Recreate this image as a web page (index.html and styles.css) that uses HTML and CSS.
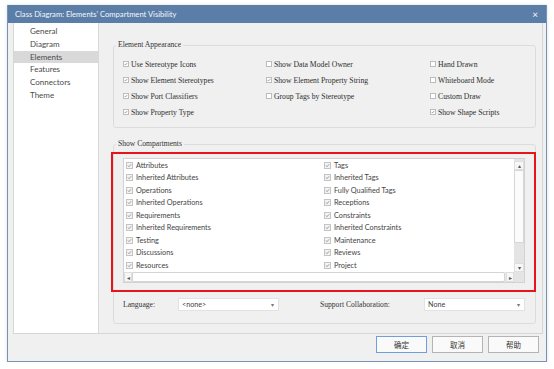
FILE: index.html
```html
<!DOCTYPE html>
<html lang="en">
<head>
    <meta charset="UTF-8">
    <title>Class Diagram: Elements' Compartment Visibility</title>
    <link rel="stylesheet" href="styles.css">
</head>
<body>
    <div class="dialog">
        <div class="titlebar">
            <span class="title">Class Diagram: Elements' Compartment Visibility</span>
            <span class="close">×</span>
        </div>

        <div class="main">
            <ul class="nav">
                <li>General</li>
                <li>Diagram</li>
                <li class="active">Elements</li>
                <li>Features</li>
                <li>Connectors</li>
                <li>Theme</li>
            </ul>

            <div class="content">
                <fieldset class="group appearance">
                    <legend>Element Appearance</legend>
                    <div class="opts">
                        <label class="opt"><span class="cb on"><svg viewBox="0 0 6 6"><path d="M1 3l1.3 1.4L5 1.4"/></svg></span>Use Stereotype Icons</label>
                        <label class="opt"><span class="cb"></span>Show Data Model Owner</label>
                        <label class="opt"><span class="cb"></span>Hand Drawn</label>

                        <label class="opt"><span class="cb on"><svg viewBox="0 0 6 6"><path d="M1 3l1.3 1.4L5 1.4"/></svg></span>Show Element Stereotypes</label>
                        <label class="opt"><span class="cb on"><svg viewBox="0 0 6 6"><path d="M1 3l1.3 1.4L5 1.4"/></svg></span>Show Element Property String</label>
                        <label class="opt"><span class="cb"></span>Whiteboard Mode</label>

                        <label class="opt"><span class="cb on"><svg viewBox="0 0 6 6"><path d="M1 3l1.3 1.4L5 1.4"/></svg></span>Show Port Classifiers</label>
                        <label class="opt"><span class="cb"></span>Group Tags by Stereotype</label>
                        <label class="opt"><span class="cb"></span>Custom Draw</label>

                        <label class="opt"><span class="cb on"><svg viewBox="0 0 6 6"><path d="M1 3l1.3 1.4L5 1.4"/></svg></span>Show Property Type</label>
                        <span></span>
                        <label class="opt"><span class="cb on"><svg viewBox="0 0 6 6"><path d="M1 3l1.3 1.4L5 1.4"/></svg></span>Show Shape Scripts</label>
                    </div>
                </fieldset>

                <fieldset class="group compartments">
                    <legend>Show Compartments</legend>
                    <div class="highlight">
                        <div class="listbox">
                            <div class="rows" id="rows"></div>
                            <div class="vscroll">
                                <span class="sbtn">▴</span>
                                <span class="thumb"></span>
                                <span class="track"></span>
                                <span class="sbtn">▾</span>
                            </div>
                            <div class="hscroll">
                                <span class="sbtn">◂</span>
                                <span class="hthumb"></span>
                                <span class="sbtn">▸</span>
                            </div>
                            <div class="corner"></div>
                        </div>
                    </div>

                    <div class="fields">
                        <span class="field-label">Language:</span>
                        <div class="select"><span>&lt;none&gt;</span><span class="arrow">▾</span></div>
                        <span class="field-label">Support Collaboration:</span>
                        <div class="select"><span>None</span><span class="arrow">▾</span></div>
                    </div>
                </fieldset>
            </div>
        </div>

        <div class="footer">
            <button class="btn default">确定</button>
            <button class="btn">取消</button>
            <button class="btn">帮助</button>
        </div>
    </div>

    <script>
        // Compartments, left column then right column
        const left = ["Attributes", "Inherited Attributes", "Operations", "Inherited Operations",
            "Requirements", "Inherited Requirements", "Testing", "Discussions", "Resources"];
        const right = ["Tags", "Inherited Tags", "Fully Qualified Tags", "Receptions",
            "Constraints", "Inherited Constraints", "Maintenance", "Reviews", "Project"];

        const rows = document.getElementById("rows");
        left.forEach((name, i) => {
            [name, right[i]].forEach(text => {
                const item = document.createElement("div");
                item.className = "item";
                item.innerHTML = '<span class="cb on"><svg viewBox="0 0 7 7"><path d="M1.3 3.5l1.5 1.6L5.8 1.8"/></svg></span>';
                item.appendChild(document.createTextNode(text));
                rows.appendChild(item);
            });
        });
    </script>
</body>
</html>
```

FILE: styles.css
```css
* {
    box-sizing: border-box;
}
body {
    margin: 0;
    background: #fff;
    font-family: Lato, "Noto Sans", sans-serif;
    color: #333;
}

.dialog {
    margin: 5px 0 0 7px;
    width: 540px;
    background: #f0f0f0;
    border: 1px solid #7893b4;
    border-top: none;
    box-shadow: 0 0 3px rgba(0, 0, 0, 0.15);
}

.titlebar {
    height: 18px;
    background: #5a7ea8;
    color: #f4f7fb;
    display: flex;
    align-items: center;
    justify-content: space-between;
    padding: 0 8px 0 7px;
    font-size: 7.6px;
}
.titlebar .close {
    font-size: 10px;
}

.main {
    display: flex;
    height: 311px;
    margin: 0 3px 0 5px;
    border: 1px solid #d6d6d6;
    border-top: none;
}

.nav {
    list-style: none;
    margin: 0;
    padding: 2px 0 0;
    width: 85px;
    background: #fff;
    border-right: 1px solid #d9d9d9;
    font-size: 8px;
    color: #4a4a4a;
}
.nav li {
    height: 12.8px;
    line-height: 12.8px;
    padding-left: 16px;
}
.nav li.active {
    background: #d9d9d9;
}

.content {
    flex-grow: 1;
    padding: 17px 6px 0 14px;
}

.group {
    margin: 0;
    padding: 0;
    border: 1px solid #dcdcdc;
    border-radius: 3px;
    min-width: 0;
}
.group legend {
    font-family: "Liberation Serif", serif;
    font-size: 7.6px;
    line-height: 10px;
    padding: 0 2px;
    margin-left: 2px;
    color: #333;
}

/* Element Appearance */
.opts {
    display: grid;
    grid-template-columns: 143px 164px 1fr;
    grid-auto-rows: 16px;
    padding: 6px 0 7px 9px;
}
.opt {
    display: flex;
    align-items: center;
    gap: 2px;
    font-family: "Liberation Serif", serif;
    font-size: 7.7px;
    color: #2e2e2e;
    white-space: nowrap;
}

.cb {
    flex-shrink: 0;
    width: 6px;
    height: 6px;
    border: 1px solid #bcbcbc;
    background: #fff;
    display: inline-flex;
}
.cb svg {
    width: 100%;
    height: 100%;
    fill: none;
    stroke: #6a6a6a;
    stroke-width: 0.9;
}

/* Show Compartments */
.compartments {
    margin-top: 11px;
}
.highlight {
    margin: 3px -1px 0 -3px;
    border: 2px solid #e8141c;
    padding: 4px 9px 7px 10px;
}
.listbox {
    height: 125px;
    background: #fff;
    border: 1px solid #d2d2d2;
    display: grid;
    grid-template-columns: 1fr 10px;
    grid-template-rows: 1fr 10px;
    overflow: hidden;
}
.rows {
    display: grid;
    grid-template-columns: 198px 1fr;
    grid-auto-rows: 12.5px;
    padding: 0 0 0 2px;
    overflow: hidden;
}
.item {
    display: flex;
    align-items: center;
    gap: 3px;
    font-size: 7.3px;
    line-height: 9px;
    color: #444;
    white-space: nowrap;
}
.item .cb {
    width: 7px;
    height: 7px;
    background: #f3f3f3;
    border-color: #c4c4c4;
}

.vscroll {
    display: flex;
    flex-direction: column;
    background: #e4e4e4;
    padding-top: 2px;
}
.sbtn {
    display: flex;
    align-items: center;
    justify-content: center;
    width: 10px;
    height: 9px;
    background: #f7f7f7;
    border: 1px solid #dedede;
    font-size: 6px;
    color: #555;
    flex-shrink: 0;
}
.thumb {
    height: 73px;
    background: #fbfbfb;
    border: 1px solid #d7d7d7;
}
.track {
    flex-grow: 1;
}
.hscroll {
    display: flex;
    background: #e9e9e9;
}
.hscroll .sbtn {
    width: 8px;
    height: 10px;
}
.hthumb {
    flex-grow: 1;
    background: #fff;
    border: 1px solid #d4d4d4;
    border-radius: 2px;
    margin-right: 1px;
}
.corner {
    background: #e4e4e4;
}

.fields {
    display: grid;
    grid-template-columns: 55px 101px 41px 104px 101px;
    grid-template-rows: 13px;
    margin: 6px 0 12px 9px;
}
.fields > :nth-child(3) {
    grid-column: 4;
}
.field-label {
    font-family: "Liberation Serif", serif;
    font-size: 7.6px;
    line-height: 13px;
    color: #333;
}
.select {
    display: flex;
    justify-content: space-between;
    align-items: center;
    padding: 0 4px 0 3px;
    background: #fff;
    border: 1px solid #e2e2e2;
    font-size: 7.2px;
    color: #444;
}
.select .arrow {
    font-size: 6px;
    color: #777;
}

.footer {
    display: flex;
    justify-content: flex-end;
    gap: 5px;
    padding: 2px 7px 8px 0;
}
.btn {
    width: 51px;
    height: 17px;
    padding: 0;
    background: #fafafa;
    border: 1px solid #b4b4b4;
    font-family: "Noto Sans CJK SC", sans-serif;
    font-size: 7.5px;
    color: #333;
}
.btn.default {
    border-color: #6f9fd8;
}
```
